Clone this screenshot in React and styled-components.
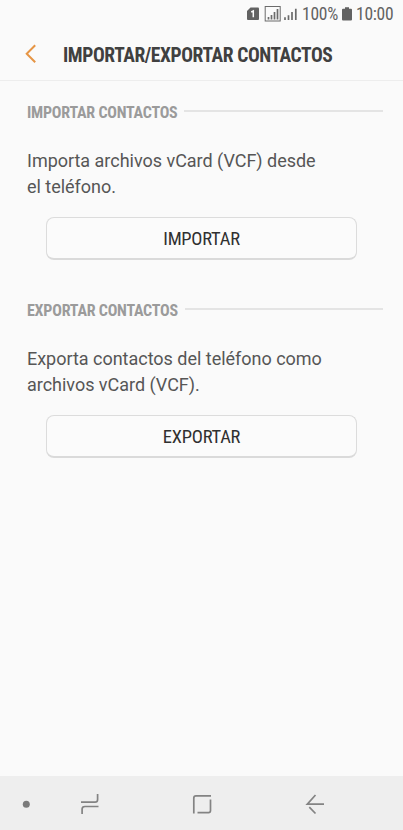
import React from "react";
import styled, { createGlobalStyle } from "styled-components";

const GlobalStyle = createGlobalStyle`
  * {
    box-sizing: border-box;
  }

  body {
    margin: 0;
    background: #fafafa;
    font-family: Roboto, "Liberation Sans", sans-serif;
  }
`;

const condensed = `
  font-family: "Roboto Condensed", Roboto, sans-serif;
  font-stretch: 75%;
  white-space: nowrap;
`;

const Screen = styled.div`
  display: flex;
  flex-direction: column;
  width: 403px;
  height: 830px;
  overflow: hidden;
  background: #fafafa;
`;

const StatusBar = styled.div`
  display: flex;
  align-items: center;
  height: 28px;
  padding-left: 247px;
  color: #626262;

  svg {
    flex: none;
  }
`;

const StatusText = styled.span`
  ${condensed}
  font-size: 17.5px;
  line-height: 28px;
  letter-spacing: -0.25px;
  margin-left: ${(props) => props.$gap}px;
`;

const SignalSvg = styled.svg`
  margin-left: 5px;
`;

const BatterySvg = styled.svg`
  margin: -1px 0 0 4px;
`;

const Header = styled.header`
  display: flex;
  align-items: center;
  height: 53px;
  padding-left: 24px;
  border-bottom: 1px solid #ededed;
`;

const Title = styled.h1`
  ${condensed}
  margin: 0 0 0 25px;
  padding-top: 3px;
  font-size: 19.5px;
  font-weight: 700;
  line-height: 26px;
  letter-spacing: -0.41px;
  color: #404040;
`;

const Content = styled.main`
  flex: 1;
  padding: 19px 20px 0 27px;
`;

const Section = styled.section`
  height: 198px;
`;

const SectionHead = styled.div`
  display: flex;
  align-items: center;
  height: 24px;

  &::after {
    content: "";
    flex: 1;
    height: 2px;
    margin: -2px 0 0 7px;
    background: #e4e4e4;
  }
`;

const SectionTitle = styled.h2`
  ${condensed}
  margin: 0;
  padding-top: 1px;
  font-size: 16px;
  font-weight: 700;
  line-height: 24px;
  letter-spacing: -0.23px;
  color: #9b9b9b;
`;

const Description = styled.p`
  margin: 24px 0 17px;
  font-size: 18px;
  line-height: 26px;
  letter-spacing: -0.02px;
  color: #565656;
`;

const ActionButton = styled.button`
  ${condensed}
  display: block;
  width: 311px;
  height: 43px;
  margin-left: 19px;
  padding: 2px 0 0;
  border: 1px solid #dcdcdc;
  border-bottom: 2px solid #dadada;
  border-radius: 8px;
  background: #fbfbfb;
  font-size: 18.5px;
  letter-spacing: -0.25px;
  color: #303030;
`;

const NavBar = styled.nav`
  height: 54px;
  background: #eeeeee;

  svg {
    display: block;
  }
`;

function SimIcon() {
  return (
    <svg width="12" height="14" viewBox="0 0 12 14">
      <path d="M3.5 0.5H11a1 1 0 0 1 1 1V12a1 1 0 0 1-1 1H1a1 1 0 0 1-1-1V4Z" fill="#626262" />
      <path d="M4.2 5 6.3 4v6.3" fill="none" stroke="#fafafa" strokeWidth="1.5" />
    </svg>
  );
}

function SignalIcons() {
  return (
    <SignalSvg width="34" height="18" viewBox="0 0 34 18">
      <rect x="1.2" y="1.5" width="15" height="14.5" fill="none" stroke="#6b6b6b" />
      <g stroke="#6b6b6b" strokeWidth="1.7">
        <path d="M4.5 12V14.5M7.5 10V14.5M10.500 7V14.5M13.5 4V14.5" />
        <path d="M21 12.3V15M24.5 10.3V15M28 7V15M31.8 3.7V15" />
      </g>
    </SignalSvg>
  );
}

function BatteryIcon() {
  return (
    <BatterySvg width="10" height="14" viewBox="0 0 10 14">
      <path d="M3 0.3h4v1.5h2a1 1 0 0 1 1 1V12.500a1 1 0 0 1-1 1H1a1 1 0 0 1-1-1V2.800a1 1 0 0 1 1-1h2Z" fill="#626262" />
    </BatterySvg>
  );
}

function ChevronIcon() {
  return (
    <svg width="14" height="20" viewBox="0 0 14 20">
      <path d="M11.2 1.2 2.7 9.7l8.5 8.6" fill="none" stroke="#e69545" strokeWidth="2" />
    </svg>
  );
}

function NavIcons() {
  return (
    <svg width="403" height="54" viewBox="0 0 403 54">
      <circle cx="26.3" cy="28.2" r="3.5" fill="#7b7b7b" />
      <g fill="none" stroke="#838383" strokeWidth="1.7">
        <path d="M81 26.2H95Q97.6 26.2 97.6 23.5V18M82.1 38V33Q82.1 30.5 85 30.5H98.5" />
        <path d="M211 19.800H196Q193.8 19.800 193.8 22V37.5M210.5 23.5V34.5Q210.5 36.6 208.5 36.6H197.5" />
        <path d="M324 28.1H307.3L315.5 19M309.3 31.2 315.5 37.5" />
      </g>
    </svg>
  );
}

function TransferSection({ title, lines, action }) {
  return (
    <Section>
      <SectionHead>
        <SectionTitle>{title}</SectionTitle>
      </SectionHead>
      <Description>
        {lines[0]}
        <br />
        {lines[1]}
      </Description>
      <ActionButton type="button">{action}</ActionButton>
    </Section>
  );
}

function App() {
  return (
    <Screen>
      <GlobalStyle />
      <StatusBar>
        <SimIcon />
        <SignalIcons />
        <StatusText $gap={4}>100%</StatusText>
        <BatteryIcon />
        <StatusText $gap={4}>10:00</StatusText>
      </StatusBar>
      <Header>
        <ChevronIcon />
        <Title>IMPORTAR/EXPORTAR CONTACTOS</Title>
      </Header>
      <Content>
        <TransferSection
          title="IMPORTAR CONTACTOS"
          lines={["Importa archivos vCard (VCF) desde", "el teléfono."]}
          action="IMPORTAR"
        />
        <TransferSection
          title="EXPORTAR CONTACTOS"
          lines={["Exporta contactos del teléfono como", "archivos vCard (VCF)."]}
          action="EXPORTAR"
        />
      </Content>
      <NavBar>
        <NavIcons />
      </NavBar>
    </Screen>
  );
}

export default App;
